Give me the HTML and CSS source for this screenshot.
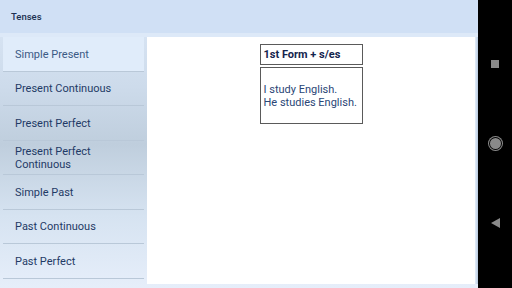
FILE: index.html
```html
<!DOCTYPE html>
<html lang="en">
  <head>
    <meta charset="UTF-8" />
    <meta name="viewport" content="width=device-width, initial-scale=1.0" />
    <title>Tenses</title>
    <link rel="stylesheet" href="styles.css">
  </head>
  <body>
    <div class="app">
      <div class="titlebar">Tenses</div>
      <div class="main">
        <ul class="sidebar">
          <li class="active">Simple Present</li>
          <li>Present Continuous</li>
          <li>Present Perfect</li>
          <li>Present Perfect<br />Continuous</li>
          <li>Simple Past</li>
          <li>Past Continuous</li>
          <li>Past Perfect</li>
        </ul>
        <div class="content">
          <div class="table">
            <div class="cell head">1st Form + s/es</div>
            <div class="cell body">I study English.<br />He studies English.</div>
          </div>
        </div>
        <div class="edge"></div>
      </div>
    </div>

    <div class="navbar">
      <span class="square"></span>
      <span class="circle"></span>
      <svg class="back" width="9" height="10" viewBox="0 0 9 10">
        <polygon points="9,0 9,10 0,5" fill="#8a8a8a" />
      </svg>
    </div>
  </body>
</html>
```
FILE: styles.css
```css
* {
  margin: 0;
  padding: 0;
  box-sizing: border-box;
}

ul,
li {
  list-style: none;
}

body {
  display: flex;
  width: 512px;
  height: 288px;
  overflow: hidden;
  font-family: Roboto, "Noto Sans", sans-serif;
}

.app {
  display: flex;
  flex-direction: column;
  width: 478px;
  height: 288px;
  background: linear-gradient(#dce8f7 0%, #cddbeb 30%, #bfcedd 50%, #d6e3f1 75%, #e6eefa 100%);
}

.titlebar {
  height: 37px;
  padding-left: 11px;
  line-height: 33px;
  font-size: 9.5px;
  font-weight: 500;
  color: #1d3152;
  background-color: #d0e0f5;
  border-bottom: 4px solid #dde9f8;
}

.main {
  display: flex;
  flex: 1;
}

.sidebar {
  width: 141px;
  margin-left: 3px;
}

.sidebar li {
  display: flex;
  align-items: center;
  height: 34.5px;
  padding: 1px 0 0 12px;
  font-size: 11px;
  line-height: 13px;
  color: #1f3a66;
  border-bottom: 1px solid #b9c8d8;
}

.sidebar .active {
  background-color: #e0ecfa;
  color: #3b5a85;
}

.content {
  display: flex;
  justify-content: center;
  width: 328px;
  height: 247px;
  margin-left: 3px;
  background-color: #fff;
}

.table {
  display: flex;
  flex-direction: column;
  gap: 2px;
  width: 103px;
  margin-top: 7px;
}

.cell {
  border: 1px solid #5a5a5a;
  padding: 0 3px;
}

.head {
  height: 21px;
  line-height: 19px;
  font-size: 11px;
  font-weight: 700;
  color: #14244d;
}

.body {
  display: flex;
  align-items: center;
  height: 57px;
  font-size: 11px;
  line-height: 13px;
  color: #2a4676;
}

.edge {
  width: 3px;
  height: 247px;
  background: linear-gradient(90deg, #e4eefa, #b7c9df);
}

.navbar {
  display: flex;
  flex-direction: column;
  align-items: center;
  justify-content: space-between;
  width: 34px;
  height: 288px;
  padding: 60px 0 60px;
  background-color: #000;
}

.square {
  width: 8px;
  height: 8px;
  background-color: #8a8a8a;
}

.circle {
  width: 13px;
  height: 13px;
  border-radius: 50%;
  background-color: #8a8a8a;
  box-shadow: 0 0 0 1px #000 inset, 0 0 0 1px #8a8a8a;
}
```
